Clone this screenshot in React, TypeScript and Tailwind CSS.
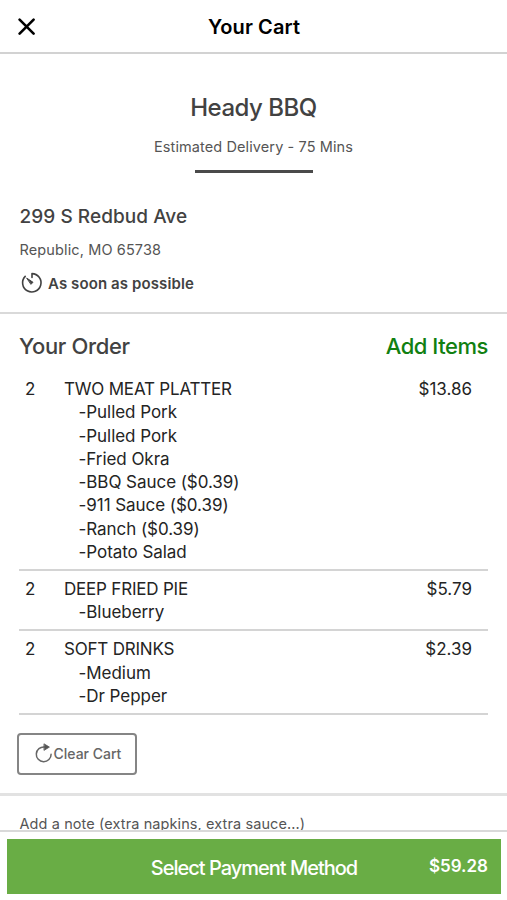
const orders = [
  {
    qty: 2,
    name: 'TWO MEAT PLATTER',
    price: '$13.86',
    options: ['Pulled Pork', 'Pulled Pork', 'Fried Okra', 'BBQ Sauce ($0.39)', '911 Sauce ($0.39)', 'Ranch ($0.39)', 'Potato Salad'],
  },
  { qty: 2, name: 'DEEP FRIED PIE', price: '$5.79', options: ['Blueberry'] },
  { qty: 2, name: 'SOFT DRINKS', price: '$2.39', options: ['Medium', 'Dr Pepper'] },
];

function CloseIcon() {
  return (
    <svg width="18" height="18" viewBox="0 0 18 18" fill="none" stroke="#000" strokeWidth="2.6" strokeLinecap="round">
      <path d="M1.6 1.6 15.6 15.6M15.6 1.6 1.6 15.6" />
    </svg>
  );
}

function TimerIcon() {
  return (
    <svg className="-mt-[3px]" width="23" height="22" viewBox="0 0 23 22" fill="none" stroke="#424242" strokeWidth="1.6" strokeLinecap="round" strokeLinejoin="round">
      <path d="M12 5.4V1.6A9.2 9.2 0 1 1 5.2 4.4" />
      <path d="M7 6.3 13 10.3 11.2 12.1Z" fill="#424242" strokeWidth="1" />
    </svg>
  );
}

function RefreshIcon() {
  return (
    <svg className="-mt-px" width="19" height="20" viewBox="0 0 19 20" fill="none" stroke="#666" strokeWidth="1.5" strokeLinecap="round">
      <path d="M9.5 4A7.4 7.4 0 1 0 16.1 11.2" />
      <path d="M9.3 1 14.4 4.1 9.3 7.2Z" fill="#555" stroke="#555" strokeWidth="0.8" />
    </svg>
  );
}

export default function App() {
  return (
    <div className="flex h-[900px] w-[507px] flex-col overflow-hidden bg-white font-['Inter',sans-serif] text-[#424242]">
      <header className="grid h-[54px] shrink-0 grid-cols-[1fr_auto_1fr] items-center border-b-2 border-[#d2d2d2] pt-0.5 pl-[18px] text-black">
        <button aria-label="Close">
          <CloseIcon />
        </button>
        <h1 className="pr-[17px] text-xl font-semibold tracking-[0.1px]">Your Cart</h1>
      </header>

      <main className="min-h-0 flex-1 overflow-hidden">
        <section className="flex h-[118px] flex-col items-center pt-[38px]">
          <h2 className="text-2xl leading-8 font-medium tracking-[-0.5px]">Heady BBQ</h2>
          <p className="mt-[13px] text-[14.5px] leading-5 tracking-[0.1px] text-[#555]">Estimated Delivery - 75 Mins</p>
          <div className="mt-[13px] h-[3px] w-[118px] shrink-0 bg-[#4a4a4a]" />
        </section>

        <section className="h-[142px] border-b-2 border-[#d9d9d9] px-[19.5px] pt-[31px]">
          <h3 className="text-[19px] leading-7 font-medium tracking-[0.05px]">299 S Redbud Ave</h3>
          <p className="mt-[9px] text-[14.5px] leading-5 tracking-[0.12px] text-[#555]">Republic, MO 65738</p>
          <div className="mt-[13px] flex h-[22px] items-center gap-[5.5px]">
            <TimerIcon />
            <span className="text-[15px] font-semibold tracking-[0.1px]">As soon as possible</span>
          </div>
        </section>

        <section className="h-[482px] border-b-[3px] border-[#e2e2e2] px-[19px] pt-[16px]">
          <div className="flex h-8 items-center justify-between text-[22px]">
            <h3 className="font-medium tracking-[-0.35px]">Your Order</h3>
            <button className="font-medium tracking-[-0.45px] text-[#118011]">Add Items</button>
          </div>
          <div className="pt-[9px]">
            {orders.map((order) => (
              <article key={order.name} className="flex border-b-2 border-[#d4d4d4] pt-[7px] pb-[4.7px] text-[17px] leading-[23.3px] text-[#242424]">
                <span className="w-[45px] pl-[6px]">{order.qty}</span>
                <div className="flex-1">
                  <div className="tracking-[-0.2px]">{order.name}</div>
                  <ul className="pl-[14.5px] tracking-[-0.05px]">
                    {order.options.map((option, i) => (
                      <li key={i}>-{option}</li>
                    ))}
                  </ul>
                </div>
                <span className="pr-4">{order.price}</span>
              </article>
            ))}
          </div>
          <button className="mt-[18px] -ml-[2px] flex h-[42px] w-[120px] items-center rounded border-2 border-[#858585] pl-[15.5px] text-sm font-medium text-[#666]">
            <RefreshIcon />
            <span>Clear Cart</span>
          </button>
        </section>

        <section className="px-[19.5px] pt-[18px]">
          <p className="text-[14.5px] leading-5 tracking-[0.1px] whitespace-nowrap text-[#555]">Add a note (extra napkins, extra sauce...)</p>
        </section>
      </main>

      <footer className="h-[70px] shrink-0 border-t-2 border-[#d9d9d9] bg-white pt-[7px] pr-1.5 pl-[7px]">
        <button className="grid h-[55px] w-full grid-cols-[1fr_auto_1fr] items-center bg-[#69ad45] px-[13px] text-white">
          <span />
          <span className="pt-0.5 text-xl font-medium tracking-[-1px]">Select Payment Method</span>
          <span className="text-right text-[17px] font-semibold">$59.28</span>
        </button>
      </footer>
    </div>
  );
}
